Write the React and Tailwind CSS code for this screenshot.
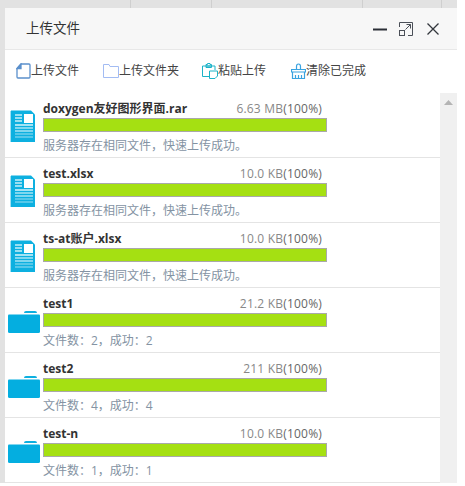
const font = { fontFamily: '"Open Sans", "Noto Sans CJK SC", sans-serif' }

const rows = [
  { name: 'doxygen友好图形界面.rar', size: '6.63 MB', note: '服务器存在相同文件，快速上传成功。', type: 'file' },
  { name: 'test.xlsx', size: '10.0 KB', note: '服务器存在相同文件，快速上传成功。', type: 'file' },
  { name: 'ts-at账户.xlsx', size: '10.0 KB', note: '服务器存在相同文件，快速上传成功。', type: 'file' },
  { name: 'test1', size: '21.2 KB', note: '文件数：2，成功：2', type: 'folder' },
  { name: 'test2', size: '211 KB', note: '文件数：4，成功：4', type: 'folder' },
  { name: 'test-n', size: '10.0 KB', note: '文件数：1，成功：1', type: 'folder' },
]

function DocIcon() {
  return (
    <svg width="26" height="32" viewBox="0 0 26 32" className="block">
      <path d="M1 0.500H21L25 4.500V32H1Z" fill="#0db0e0" />
      <path d="M0.500 1V32" stroke="#9fe0f2" />
      <rect x="14" y="4" width="9" height="9" fill="#ffffff" />
      <path d="M5 5H12M5 8H12M5 11H12" stroke="#c8eef8" strokeWidth="1.500" />
      <path d="M5 15H23" stroke="#d8f4fb" strokeWidth="1.500" />
      <path d="M5 18H23M5 21H23" stroke="#a6e3f4" strokeWidth="1.500" />
      <path d="M5 24H23M5 27H23" stroke="#6fd0ec" strokeWidth="1.500" />
    </svg>
  )
}

function FolderIcon() {
  return (
    <svg width="32" height="22" viewBox="0 0 32 22" className="block">
      <path d="M16 2Q16 0 18 0H27Q29 0 29 2Z" fill="#0db0e0" />
      <path d="M0 4.500Q0 3.500 1 3.500H31Q32 3.500 32 4.500V20.500Q32 22 30.500 22H1.500Q0 22 0 20.500Z" fill="#04aee0" />
    </svg>
  )
}

function Row({ name, size, note, type }) {
  return (
    <div className="h-[65px] border-b border-[#e4e4e4] flex shrink-0">
      <div className={type === 'file' ? 'w-[38px] pl-[5px] pt-[17px] shrink-0' : 'w-[38px] pl-[3px] pt-[23px] shrink-0'}>
        {type === 'file' ? <DocIcon /> : <FolderIcon />}
      </div>
      <div className="w-[284px] shrink-0">
        <div className="h-[25px] pt-[8px] flex justify-between text-[12px] leading-[16px]">
          <span className="font-bold text-[#333333]">{name}</span>
          <span className="pr-[5px] text-[#888888] tracking-[0.2px]">
            {size}<span className="text-[#666666]">(100%)</span>
          </span>
        </div>
        <div className="h-[14px] border border-[#a9a9a9] bg-[#a5e012]"></div>
        <div className="mt-[6px] text-[12px] leading-[16px] text-[#8493a3]">{note}</div>
      </div>
    </div>
  )
}

function ToolItem({ className, icon, label }) {
  return (
    <div className={`flex items-center text-[12px] text-[#444444] ${className}`}>
      {icon}
      <span>{label}</span>
    </div>
  )
}

export default function App() {
  return (
    <div className="w-[465px] h-[486px] bg-white overflow-hidden" style={font}>
      <div className="w-[457px] h-[483px] pl-[5px] pt-[8px] bg-[linear-gradient(#cfcfcf,#cfcfcf),linear-gradient(#cfcfcf,#cfcfcf),linear-gradient(#cfcfcf,#cfcfcf),linear-gradient(#cfcfcf,#cfcfcf),linear-gradient(#e2e2e2,#e2e2e2)] bg-[size:1px_8px,1px_8px,1px_8px,1px_8px,auto] bg-[position:130px_0,211px_0,362px_0,441px_0,0_0] bg-no-repeat">
        <div className="h-full bg-white flex flex-col overflow-hidden">
          <div className="h-[42px] shrink-0 bg-[#f7f7f7] border-b border-[#e8e8e8] flex items-center pl-[21px]">
            <span className="text-[13.500px] text-[#333333]">上传文件</span>
            <div className="ml-auto mr-[16px] flex items-center gap-[10px]">
              <svg width="16" height="16" viewBox="0 0 16 16"><path d="M1 8.500H15" stroke="#2b2f36" strokeWidth="2" /></svg>
              <svg width="16" height="16" viewBox="0 0 16 16" fill="none" stroke="#4a4f57">
                <path d="M1.500 6V1.500H14.500V14.500H10M7.500 8.500L12.500 3.500M8.500 3.500H12.500V7.500" />
                <rect x="1.500" y="9.500" width="5" height="5" />
              </svg>
              <svg width="16" height="16" viewBox="0 0 16 16" className="ml-[1px]" fill="none" stroke="#33373d" strokeWidth="1.300"><path d="M2.500 2.500L13.500 13.500M13.500 2.500L2.500 13.500" /></svg>
            </div>
          </div>
          <div className="h-[43px] shrink-0 flex items-center pl-[11px] pb-[1px]">
            <ToolItem
              label="上传文件"
              icon={
                <svg width="15" height="16" viewBox="0 0 15 16" fill="none" stroke="#5b90cc" strokeWidth="1.300">
                  <path d="M1 5.500L5 1H13Q14 1 14 2V14Q14 15 13 15H2Q1 15 1 14Z" />
                  <path d="M1 5.500H5V1Z" fill="#5b90cc" />
                </svg>
              }
            />
            <ToolItem
              className="ml-[24px]"
              label="上传文件夹"
              icon={
                <svg width="16" height="14" viewBox="0 0 16 14" fill="none" stroke="#a3bcf3">
                  <path d="M0.500 13.500V0.500H6L7 2.500H15.500V13.500Z" />
                </svg>
              }
            />
            <ToolItem
              className="ml-[23px]"
              label="粘贴上传"
              icon={
                <svg width="16" height="16" viewBox="0 0 16 16" fill="none" stroke="#1cb3c8">
                  <path d="M7 13.500H0.500V3H13V7M4 3V1.500H5.500V0.500H8V1.500H9.500V3H4V4.500H9.500V3" />
                  <path d="M7.500 8H15.500V13L13 15.500H7.500Z" fill="#ffffff" />
                </svg>
              }
            />
            <ToolItem
              className="ml-[25px]"
              label="清除已完成"
              icon={
                <svg width="15" height="16" viewBox="0 0 15 16" fill="none" stroke="#3aa3e0" strokeWidth="1.200">
                  <path d="M5.500 6V3.500Q5.500 1 7.500 1Q9.500 1 9.500 3.500V6M0.500 6.500H14.500V9H0.500ZM1.500 9V15.500H13.500V9M4.500 12V15.500M7.500 12V15.500M10.500 12V15.500" />
                </svg>
              }
            />
          </div>
          <div className="flex flex-1 min-h-0">
            <div className="flex-1 flex flex-col overflow-hidden">
              {rows.map((row) => <Row key={row.name} {...row} />)}
            </div>
            <div className="w-[17px] shrink-0 bg-[#f0f0f0] flex justify-center pt-[7px]">
              <svg width="9" height="5" viewBox="0 0 9 5"><path d="M4.500 0L9 5H0Z" fill="#b4b4b4" /></svg>
            </div>
          </div>
        </div>
      </div>
    </div>
  )
}
